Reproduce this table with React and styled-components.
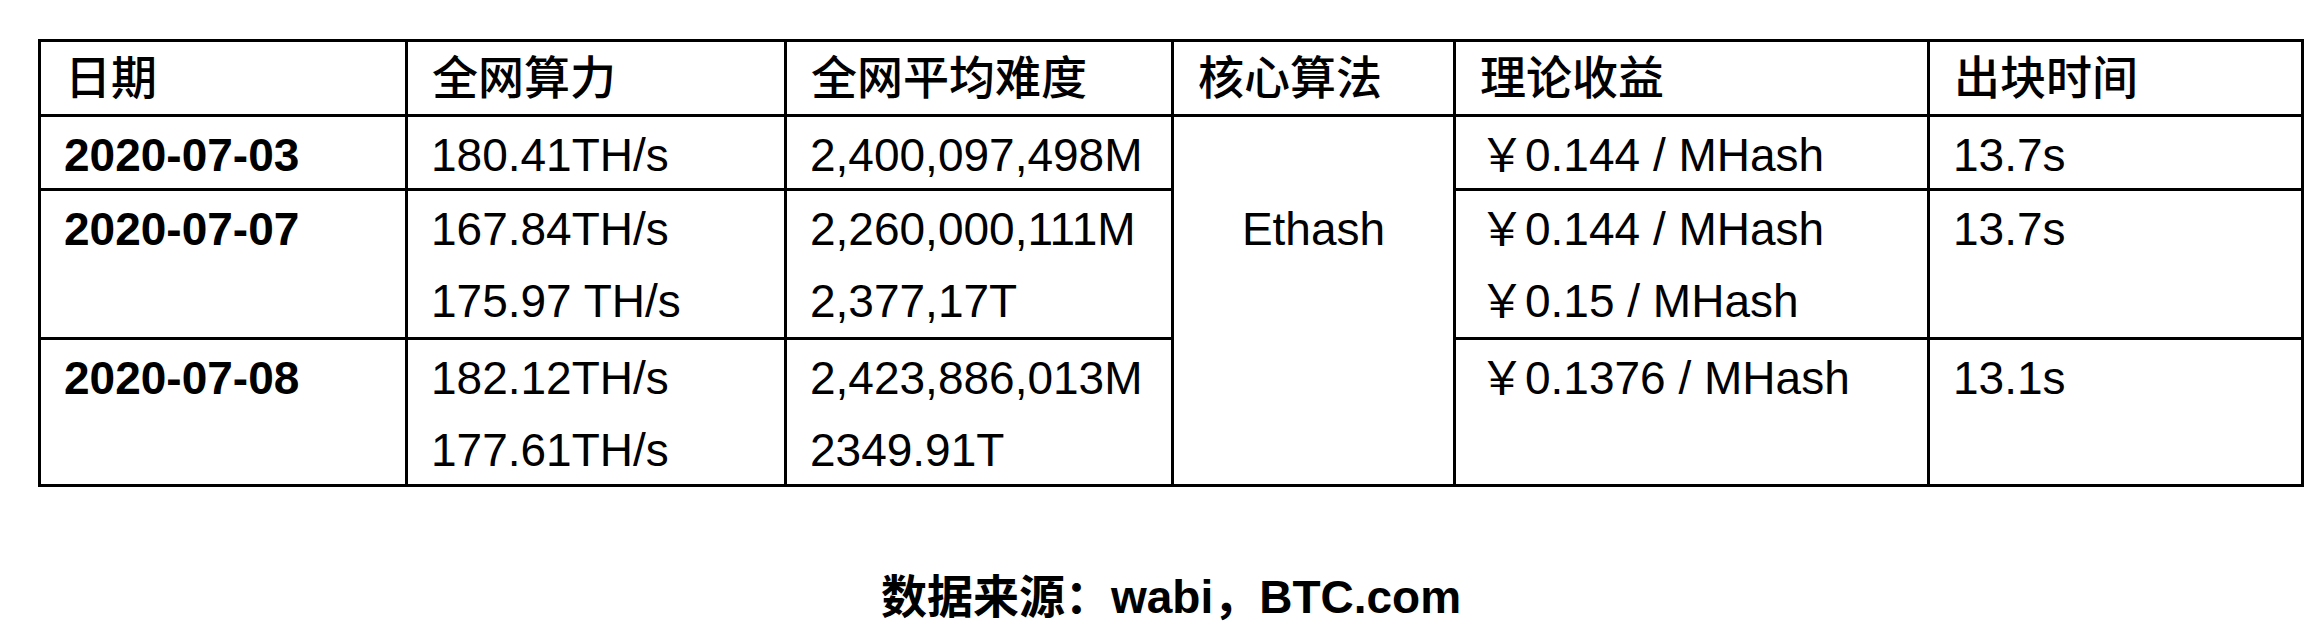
import React from 'react';
import styled, { createGlobalStyle } from 'styled-components';

const GlobalStyle = createGlobalStyle`
  body {
    margin: 0;
    background: #fff;
    color: #000;
    font-family: "Liberation Sans", "Noto Sans CJK SC", sans-serif;
  }
`;

// 表头
const heads = ['日期', '全网算力', '全网平均难度', '核心算法', '理论收益', '出块时间'];

// 每日数据
const rows = [
  {
    date: '2020-07-03',
    hash: ['180.41TH/s'],
    diff: ['2,400,097,498M'],
    income: ['￥0.144 / MHash'],
    time: '13.7s',
  },
  {
    date: '2020-07-07',
    hash: ['167.84TH/s', '175.97 TH/s'],
    diff: ['2,260,000,111M', '2,377,17T'],
    income: ['￥0.144 / MHash', '￥0.15 / MHash'],
    time: '13.7s',
  },
  {
    date: '2020-07-08',
    hash: ['182.12TH/s', '177.61TH/s'],
    diff: ['2,423,886,013M', '2349.91T'],
    income: ['￥0.1376 / MHash'],
    time: '13.1s',
  },
];

const App = () => {
  return (
    <Page>
      <GlobalStyle />
      <Wrap>
        <Table>
          {heads.map((h) => (
            <HeadCell key={h}>{h}</HeadCell>
          ))}
          {rows.map((row, index) => (
            <React.Fragment key={row.date}>
              <Cell $bold>{row.date}</Cell>
              <Cell>
                {row.hash.map((v) => (
                  <Line key={v}>{v}</Line>
                ))}
              </Cell>
              <Cell>
                {row.diff.map((v) => (
                  <Line key={v}>{v}</Line>
                ))}
              </Cell>
              {/* 核心算法 merged */}
              {index === 0 && <AlgoCell>Ethash</AlgoCell>}
              <Cell>
                {row.income.map((v) => (
                  <Line key={v}>{v}</Line>
                ))}
              </Cell>
              <Cell>{row.time}</Cell>
            </React.Fragment>
          ))}
        </Table>
        <Caption>数据来源：wabi，BTC.com</Caption>
      </Wrap>
    </Page>
  );
};

export default App;

// style
const Page = styled.div`
  padding: 39px 0 0 38px;
`;

const Wrap = styled.div`
  width: fit-content;
  display: flex;
  flex-direction: column;
  align-items: center;
`;

const Table = styled.div`
  display: grid;
  grid-template-columns: 364px 376px 384px 279px 471px 371px;
  grid-template-rows: 72px 71px 146px 144px;
  gap: 3px;
  padding: 3px;
  background: #000;
  font-size: 46px;
`;

const HeadCell = styled.div`
  background: #fff;
  padding: 0 24px;
  line-height: 72px;
  font-weight: 500;
  white-space: nowrap;
`;

const Cell = styled.div`
  background: #fff;
  padding: 2px 23px 0;
  line-height: 72px;
  white-space: nowrap;
  font-weight: ${(p) => (p.$bold ? 700 : 400)};
`;

const Line = styled.div``;

const AlgoCell = styled(Cell)`
  grid-column: 4;
  grid-row: 2 / span 3;
  padding-top: 76px;
  text-align: center;
`;

const Caption = styled.div`
  margin-top: 82px;
  font-size: 46px;
  font-weight: 700;
  line-height: 56px;
  white-space: nowrap;
`;
